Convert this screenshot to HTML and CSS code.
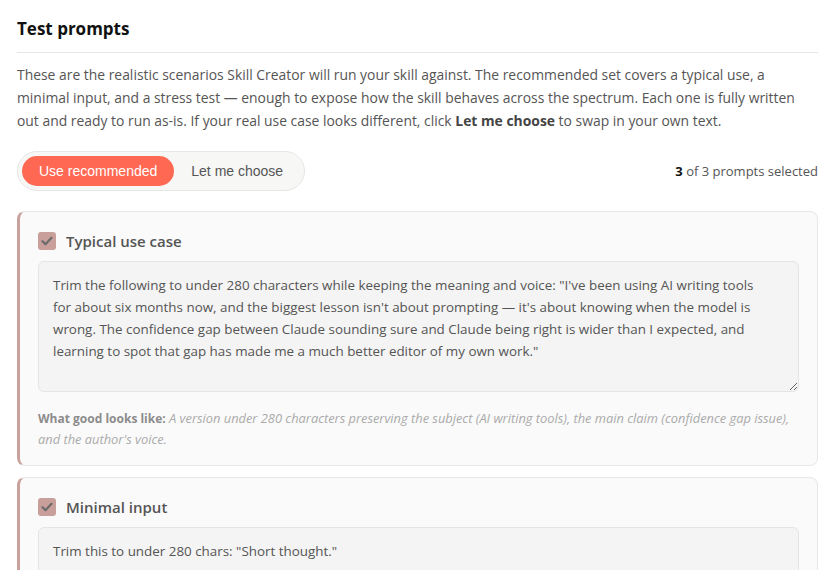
FILE: index.html
```html
<!DOCTYPE html>
<html>
<head>
<meta charset="utf-8">
<link rel="stylesheet" href="styles.css">
</head>
<body>
<div class="page">
  <h2 class="title">Test prompts</h2>
  <p class="intro">These are the realistic scenarios Skill Creator will run your skill against. The recommended set covers a typical use, a minimal input, and a stress test — enough to expose how the skill behaves across the spectrum. Each one is fully written out and ready to run as-is. If your real use case looks different, click <b>Let me choose</b> to swap in your own text.</p>
  <div class="toolbar">
    <div class="toggle">
      <button class="tbtn active">Use recommended</button>
      <button class="tbtn">Let me choose</button>
    </div>
    <div class="count"><b>3</b> of 3 prompts selected</div>
  </div>
  <div class="card">
    <div class="card-head">
      <span class="check"><svg width="18" height="18" viewBox="0 0 18 18"><path d="M4.5 9.2l3 3 6-6.4" fill="none" stroke="#6b6b6b" stroke-width="2.2" stroke-linecap="round" stroke-linejoin="round"/></svg></span>
      <span class="card-title">Typical use case</span>
    </div>
    <textarea class="prompt">Trim the following to under 280 characters while keeping the meaning and voice: "I've been using AI writing tools for about six months now, and the biggest lesson isn't about prompting — it's about knowing when the model is wrong. The confidence gap between Claude sounding sure and Claude being right is wider than I expected, and learning to spot that gap has made me a much better editor of my own work."</textarea>
    <p class="good"><b>What good looks like:</b> <i>A version under 280 characters preserving the subject (AI writing tools), the main claim (confidence gap issue), and the author's voice.</i></p>
  </div>
  <div class="card">
    <div class="card-head">
      <span class="check"><svg width="18" height="18" viewBox="0 0 18 18"><path d="M4.5 9.2l3 3 6-6.4" fill="none" stroke="#6b6b6b" stroke-width="2.2" stroke-linecap="round" stroke-linejoin="round"/></svg></span>
      <span class="card-title">Minimal input</span>
    </div>
    <textarea class="prompt">Trim this to under 280 chars: "Short thought."</textarea>
  </div>
</div>
</body>
</html>
```
FILE: styles.css
```css
html, body {
  margin: 0;
  padding: 0;
  background: #ffffff;
}
body {
  font-family: "Open Sans", "Noto Sans", sans-serif;
  color: #555;
  overflow: hidden;
  height: 570px;
}
.page {
  padding: 17px 16px 0 17px;
}
.title {
  margin: 0;
  font-size: 17px;
  font-weight: 700;
  color: #111;
  line-height: 24px;
  padding-bottom: 11px;
  border-bottom: 1px solid #e6e6e6;
}
.intro {
  margin: 10px 0 0 0;
  font-size: 13.9px;
  line-height: 23px;
  color: #555;
}
.intro b {
  color: #444;
}
.toolbar {
  display: flex;
  align-items: center;
  justify-content: space-between;
  margin-top: 19px;
}
.toggle {
  display: flex;
  align-items: center;
  padding: 4px;
  background: #f7f7f5;
  border: 1px solid #e6e6e6;
  border-radius: 20px;
}
.tbtn {
  font-family: "Liberation Sans", Arial, sans-serif;
  font-size: 14px;
  border: 0;
  background: transparent;
  color: #555;
  height: 30px;
  padding: 0 17px;
  border-radius: 15px;
}
.tbtn.active {
  background: #ff6954;
  color: #fff;
}
.count {
  font-size: 13px;
  color: #555;
}
.count b {
  color: #111;
}
.card {
  margin-top: 20px;
  background: #fafafa;
  border: 1px solid #e8e8e8;
  border-left: 3px solid #c9a19c;
  border-radius: 8px;
  padding: 19px 18px 16px 18px;
}
.card + .card {
  margin-top: 11px;
}
.card-head {
  display: flex;
  align-items: center;
  gap: 10px;
}
.check {
  width: 18px;
  height: 18px;
  border-radius: 3px;
  background: #c89f9a;
  display: flex;
}
.card-title {
  font-size: 15px;
  font-weight: 600;
  color: #555;
}
.prompt {
  display: block;
  box-sizing: border-box;
  width: 100%;
  margin-top: 10px;
  height: 131px;
  background: #f4f4f4;
  border: 1px solid #e5e5e5;
  border-radius: 6px;
  padding: 12px 34px 10px 14px;
  font-family: "Open Sans", "Noto Sans", sans-serif;
  font-size: 13.4px;
  line-height: 22px;
  color: #555;
  resize: vertical;
  overflow: hidden;
}
.good {
  margin: 16px 0 0 0;
  font-size: 12.85px;
  line-height: 20px;
  color: #aaa;
}
.good b {
  font-size: 12px;
  color: #8c8c8c;
}
```
